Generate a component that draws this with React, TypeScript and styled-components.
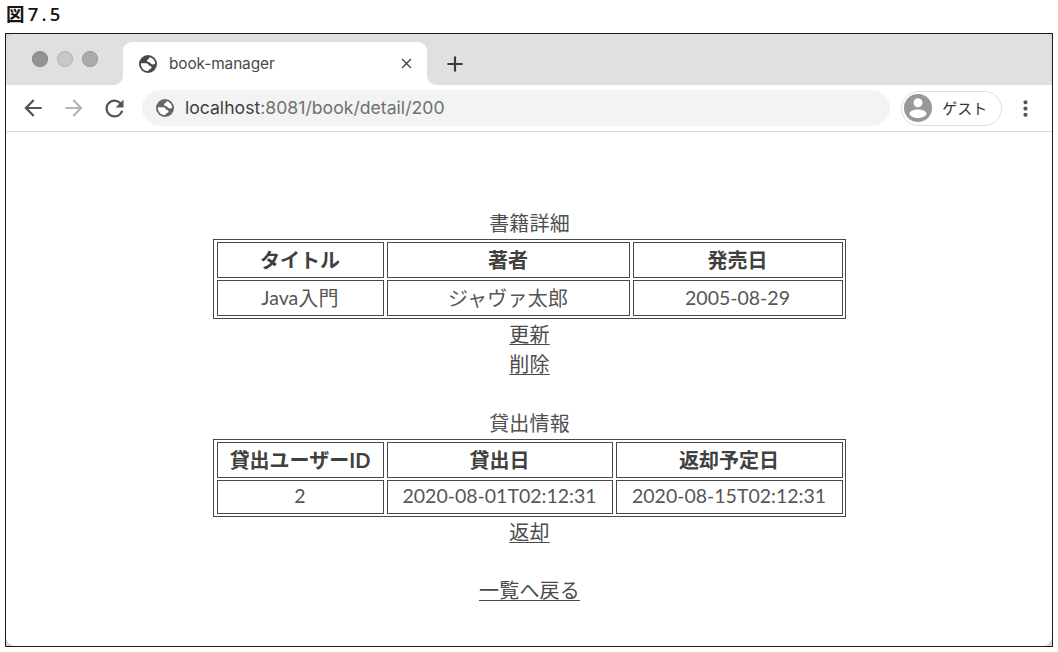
import React from "react";
import styled, { createGlobalStyle } from "styled-components";
import { MdArrowBack, MdArrowForward, MdRefresh, MdClose, MdAdd, MdMoreVert } from "react-icons/md";

const GlobalStyle = createGlobalStyle`
  * { box-sizing: border-box; }
  body { margin: 0; background: #fff; font-family: Lato, "Noto Sans CJK JP", sans-serif; color: #4a4a4a; }
`;

const Figure = styled.figure`
  margin: 0;
  padding: 0 5px;
  width: 1058px;
  height: 652px;
`;

const FigureLabel = styled.figcaption`
  height: 33px;
  padding-left: 1px;
  font: 600 18.5px/27px "Open Sans", "Noto Sans CJK JP", sans-serif;
  letter-spacing: 3.2px;
  color: #1a1414;
`;

const Frame = styled.div`
  width: 1048px;
  height: 614px;
  border: 1px solid #231a1c;
  background: #d2d2d2;
`;

const Window = styled.div`
  height: 100%;
  display: flex;
  flex-direction: column;
  border-radius: 9px;
  overflow: hidden;
  background: #fff;
`;

const TabStrip = styled.div`
  height: 51px;
  display: flex;
  align-items: flex-end;
  background: linear-gradient(#e0e0e0 60%, #fff 60%);
`;

const Lights = styled.div`
  width: 117px;
  height: 51px;
  padding: 17px 0 0 26px;
  display: flex;
  gap: 9.7px;
  border-radius: 0 0 9px 0;
  background: #e0e0e0;
`;

const Light = styled.span<{ $fill: string; $edge: string }>`
  width: 15.5px;
  height: 15.5px;
  border-radius: 50%;
  background: ${(p) => p.$fill};
  border: 1px solid ${(p) => p.$edge};
`;

const Tab = styled.div`
  width: 304px;
  height: 43px;
  padding: 0 12px 0 16px;
  display: flex;
  align-items: center;
  border-radius: 9px 9px 0 0;
  background: #fff;
  font: 400 15.4px/20px Inter, sans-serif;
  letter-spacing: -0.1px;
  color: #484848;
`;

const TabTitle = styled.span`
  flex: 1;
  margin-left: 12px;
`;

const StripRest = styled.div`
  flex: 1;
  height: 51px;
  padding: 8px 0 0 15px;
  display: flex;
  align-items: center;
  border-radius: 0 0 0 9px;
  background: #e0e0e0;
  color: #3c3638;
`;

const Toolbar = styled.div`
  height: 47px;
  padding: 0 14px;
  display: flex;
  align-items: center;
  border-bottom: 1px solid #dadada;
`;

const NavButtons = styled.div`
  width: 122px;
  display: flex;
  gap: 14.500px;
  color: #555;
  svg:nth-child(2) { color: #b5b5b5; }
`;

const AddressBar = styled.div`
  width: 749px;
  height: 36px;
  padding: 0 0 0 14px;
  display: flex;
  align-items: center;
  gap: 11px;
  border-radius: 18px;
  background: #f2f3f3;
  color: #707070;
  font: 400 17.6px/24px Inter, sans-serif;
  letter-spacing: 0.02px;
`;

const Host = styled.span`
  color: #3f3f3f;
`;

const Profile = styled.div`
  width: 101px;
  height: 35px;
  margin: 0 11px;
  padding-left: 2px;
  display: flex;
  align-items: center;
  gap: 10px;
  border: 1px solid #dfdfdf;
  border-radius: 18px;
  font: 400 15px/20px "Noto Sans CJK JP", sans-serif;
  color: #333;
`;

const Page = styled.main`
  flex: 1;
  padding-top: 75px;
  display: flex;
  flex-direction: column;
  align-items: center;
  font-size: 20px;
`;

const Caption = styled.div`
  height: 32px;
  padding-left: 1px;
  line-height: 32px;
  letter-spacing: 0.15px;
  color: #505050;
`;

const Table = styled.div<{ $columns: string; $rows: string }>`
  display: grid;
  grid-template-columns: ${(p) => p.$columns};
  grid-template-rows: ${(p) => p.$rows};
  gap: 2px 3px;
  padding: 2px 2px 2px 3px;
  border: 1px solid #484848;
`;

const Cell = styled.div<{ $head?: boolean }>`
  display: flex;
  align-items: center;
  justify-content: center;
  border: 1px solid #484848;
  line-height: ${(p) => (p.$head ? "30px" : "28px")};
  font-size: ${(p) => (p.$head ? "20px" : "19.5px")};
  font-weight: ${(p) => (p.$head ? 700 : 400)};
  color: ${(p) => (p.$head ? "#404040" : "#565656")};
`;

const LoanCell = styled(Cell)`
  padding-bottom: 2px;
`;

const Cjk = styled.span`
  font-size: 20px;
  letter-spacing: 0.2px;
`;

const PageLink = styled.a<{ $gap?: number }>`
  height: 30px;
  margin: 0 0 ${(p) => p.$gap ?? 0}px 1px;
  line-height: 30px;
  letter-spacing: 0.2px;
  text-decoration: underline 1px;
  text-underline-offset: 2px;
  text-decoration-skip-ink: none;
`;

const Globe = ({ color }: { color: string }) => (
  <svg width="18" height="18" viewBox="0 0 18 18">
    <circle cx="9" cy="9" r="9" fill={color} />
    <path
      fill="#fff"
      d="M10.600 1.900C13.800 2.700 16 5.400 16.200 8.500c-.9 1-2.700 1.200-3.900.500-.9-.5-.9-1.500-1.900-1.700-1.500-.2-2.700-.8-2.300-2.100.3-1 1.500-.9 2-1.600.4-.500.300-1.100.500-1.700zM1.900 8.200h4.400c2 0 3.100.6 3.400 1.900.2.900 1.400.7 2.200 1.100 1.100.6.8 2-.1 2.600-.8.5-1.700.500-2 1.200-.2.400-.300.800-.600 1.100C5 16.100 1.700 12.900 1.900 8.200z"
    />
  </svg>
);

const Avatar = () => (
  <svg width="28" height="28" viewBox="0 0 28 28">
    <circle cx="14" cy="14" r="14" fill="#989898" />
    <circle cx="14" cy="8.800" r="4.500" fill="#fff" />
    <path fill="#fff" d="M14 15.500c4.500 0 8.500 1.600 8.500 4.200 0 2.300-4.500 4.300-8.500 4.300s-8.500-2-8.500-4.300c0-2.600 4-4.200 8.500-4.200z" />
  </svg>
);

export default function App() {
  return (
    <>
      <GlobalStyle />
      <Figure>
        <FigureLabel>図7.5</FigureLabel>
        <Frame>
          <Window>
            <TabStrip>
              <Lights>
                <Light $fill="#929292" $edge="#818181" />
                <Light $fill="#c8c8c8" $edge="#b2b2b2" />
                <Light $fill="#aaa" $edge="#959595" />
              </Lights>
              <Tab>
                <Globe color="#484848" />
                <TabTitle>book-manager</TabTitle>
                <MdClose size={17} />
              </Tab>
              <StripRest>
                <MdAdd size={26} />
              </StripRest>
            </TabStrip>
            <Toolbar>
              <NavButtons>
                <MdArrowBack size={26} />
                <MdArrowForward size={26} />
                <MdRefresh size={27} />
              </NavButtons>
              <AddressBar>
                <Globe color="#666" />
                <span>
                  <Host>localhost</Host>:8081/book/detail/200
                </span>
              </AddressBar>
              <Profile>
                <Avatar />
                ゲスト
              </Profile>
              <MdMoreVert size={25} color="#555" />
            </Toolbar>
            <Page>
              <Caption>書籍詳細</Caption>
              <Table $columns="167px 243px 210px" $rows="36px 36px">
                <Cell $head>タイトル</Cell>
                <Cell $head>著者</Cell>
                <Cell $head>発売日</Cell>
                <Cell>Java<Cjk>入門</Cjk></Cell>
                <Cell><Cjk>ジャヴァ太郎</Cjk></Cell>
                <Cell>2005-08-29</Cell>
              </Table>
              <PageLink>更新</PageLink>
              <PageLink $gap={28}>削除</PageLink>
              <Caption>貸出情報</Caption>
              <Table $columns="167px 226px 227px" $rows="36px 34px">
                <Cell $head>貸出ユーザーID</Cell>
                <Cell $head>貸出日</Cell>
                <Cell $head>返却予定日</Cell>
                <LoanCell>2</LoanCell>
                <LoanCell>2020-08-01T02:12:31</LoanCell>
                <LoanCell>2020-08-15T02:12:31</LoanCell>
              </Table>
              <PageLink $gap={28}>返却</PageLink>
              <PageLink>一覧へ戻る</PageLink>
            </Page>
          </Window>
        </Frame>
      </Figure>
    </>
  );
}
